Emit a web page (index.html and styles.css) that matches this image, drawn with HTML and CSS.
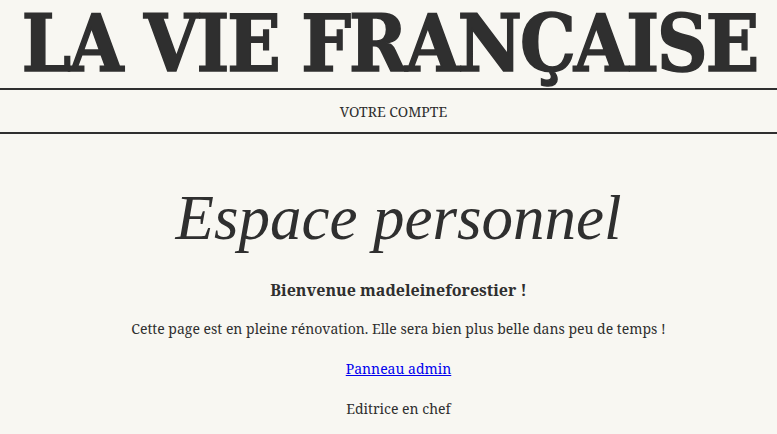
FILE: index.html
```html
<!DOCTYPE html>
<html lang="fr">
<head>
<meta charset="utf-8">
<title>La Vie Française</title>
<link rel="stylesheet" href="styles.css">
</head>
<body>
<header class="masthead">
  <h1 class="brand"><span class="brand-text">LA VIE FRANÇAISE</span></h1>
  <nav class="nav"><a class="nav-link" href="#">VOTRE COMPTE</a></nav>
</header>
<main class="content">
  <h2 class="page-title">Espace personnel</h2>
  <p class="welcome">Bienvenue madeleineforestier !</p>
  <p class="text">Cette page est en pleine rénovation. Elle sera bien plus belle dans peu de temps !</p>
  <p class="text"><a class="admin-link" href="#">Panneau admin</a></p>
  <p class="text">Editrice en chef</p>
</main>
</body>
</html>
```
FILE: styles.css
```css
html, body {
  margin: 0;
  padding: 0;
  background: #f8f7f2;
  color: #2f2f2f;
  font-family: "Noto Serif", "DejaVu Serif", serif;
}
.masthead {
  display: flex;
  flex-direction: column;
}
.brand {
  margin: 0;
  height: 88px;
  display: flex;
  align-items: center;
  justify-content: center;
  padding-left: 2px;
  border-bottom: 2px solid #2f2f2f;
}
.brand-text {
  white-space: nowrap;
  font-family: "DejaVu Serif", serif;
  font-stretch: condensed;
  font-weight: 700;
  font-size: 78px;
  letter-spacing: -2px;
  line-height: 1;
  color: #2f2f2f;
  -webkit-text-stroke: 1.5px #2f2f2f;
}
.nav {
  height: 42px;
  display: flex;
  align-items: center;
  justify-content: center;
  padding-left: 10px;
  border-bottom: 2px solid #2f2f2f;
}
.nav-link {
  font-size: 14px;
  color: #2f2f2f;
  text-decoration: none;
}
.content {
  display: flex;
  flex-direction: column;
  align-items: center;
  padding-top: 44px;
  padding-left: 20px;
}
.page-title {
  margin: 0;
  font-family: "Liberation Serif", serif;
  font-style: italic;
  font-weight: 400;
  font-size: 63px;
  line-height: 80px;
}
.welcome {
  margin: 23px 0 0;
  font-weight: 700;
  font-size: 16px;
  line-height: 19px;
}
.text {
  margin: 18px 0 0;
  font-size: 14px;
  line-height: 22px;
}
.admin-link {
  color: #0000ee;
}
```
